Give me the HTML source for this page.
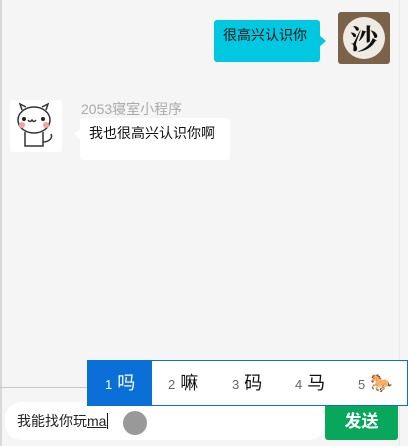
<!DOCTYPE html>
<html><head><meta charset="utf-8"><style>
*{margin:0;padding:0;box-sizing:border-box}
body{width:408px;height:446px;background:#f5f5f5;position:relative;overflow:hidden;font-family:"Liberation Sans","Noto Sans CJK SC",sans-serif}
.abs{position:absolute}
</style></head><body>
<div class="abs" style="left:0;top:0;width:2px;height:446px;background:#d8d8d8"></div>
<div class="abs" style="left:399px;top:0;width:1px;height:446px;background:#e8e8e8"></div>
<!-- right message -->
<div class="abs" style="left:214px;top:20px;width:106px;height:42px;background:#00c8e0;border-radius:3px;font-size:14px;color:#111;line-height:30px;padding-left:9px;padding-top:0">很高兴认识你</div>
<div class="abs" style="left:319px;top:35px;width:0;height:0;border-top:6px solid transparent;border-bottom:6px solid transparent;border-left:7px solid #00c8e0"></div>
<div class="abs" style="left:338px;top:12px;width:52px;height:52px;background:#7b6249;border-radius:3px">
<div class="abs" style="left:5px;top:5px;width:42px;height:42px;border-radius:50%;background:#eeeae4;font-family:'Noto Serif CJK SC',serif;font-size:28px;font-weight:bold;text-align:center;line-height:42px;color:#111">沙</div></div>
<!-- left message -->
<div class="abs" style="left:10px;top:100px;width:52px;height:52px;background:#fff;border-radius:3px">
<svg width="52" height="52" viewBox="0 0 52 52"><g fill="none" stroke="#333" stroke-width="1.5"><ellipse cx="24" cy="20" rx="16" ry="13" fill="#fff"/><path d="M12 10 l-2-6 6 3 M36 10 l2-6 -6 3"/><path d="M15 32 v14 h18 v-14"/><path d="M33 42 c6 0 10-4 8-8"/><path d="M18 20 q2 3 4 0 q2 3 4 0"/></g><circle cx="14" cy="19" r="2" fill="#222"/><circle cx="33" cy="19" r="2" fill="#222"/><circle cx="12" cy="25" r="3" fill="#f6a0a0"/><circle cx="36" cy="25" r="3" fill="#f6a0a0"/></svg></div>
<div class="abs" style="left:81px;top:99px;font-size:14px;color:#aaa">2053寝室小程序</div>
<div class="abs" style="left:80px;top:118px;width:150px;height:42px;background:#fff;border-radius:3px;font-size:14px;color:#111;line-height:30px;padding-left:9px">我也很高兴认识你啊</div>
<div class="abs" style="left:74px;top:128px;width:0;height:0;border-top:6px solid transparent;border-bottom:6px solid transparent;border-right:7px solid #fff"></div>
<!-- bottom -->
<div class="abs" style="left:0;top:387px;width:400px;height:1px;background:#c8c8c8"></div>
<div class="abs" style="left:5px;top:402px;width:320px;height:38px;background:#fff;border-radius:16px;font-size:14px;color:#222;line-height:38px;padding-left:12px">我能找你玩<u>ma</u><span style="border-left:1px solid #111;margin-left:1px"></span></div>
<div class="abs" style="left:123px;top:411px;width:24px;height:24px;border-radius:50%;background:#999"></div>
<div class="abs" style="left:325px;top:403px;width:73px;height:37px;background:#09a75c;border-radius:3px;color:#fff;font-weight:bold;font-size:17px;text-align:center;line-height:37px">发送</div>
<!-- IME -->
<div class="abs" style="left:87px;top:360px;width:321px;height:46px;background:#fff;border:1px solid #0a6fd6;font-size:18px;color:#111;line-height:44px">
<div class="abs" style="left:0;top:0;width:64px;height:44px;background:#0a6fd6;color:#fff;padding-left:17px"><span style="font-size:13px">1</span> 吗</div>
<div class="abs" style="left:80px;top:0"><span style="font-size:13px;color:#666">2</span> 嘛</div>
<div class="abs" style="left:144px;top:0"><span style="font-size:13px;color:#666">3</span> 码</div>
<div class="abs" style="left:207px;top:0"><span style="font-size:13px;color:#666">4</span> 马</div>
<div class="abs" style="left:270px;top:0"><span style="font-size:13px;color:#666">5</span> <span style="color:#c0601a">🐎</span></div>
</div>
</body></html>
